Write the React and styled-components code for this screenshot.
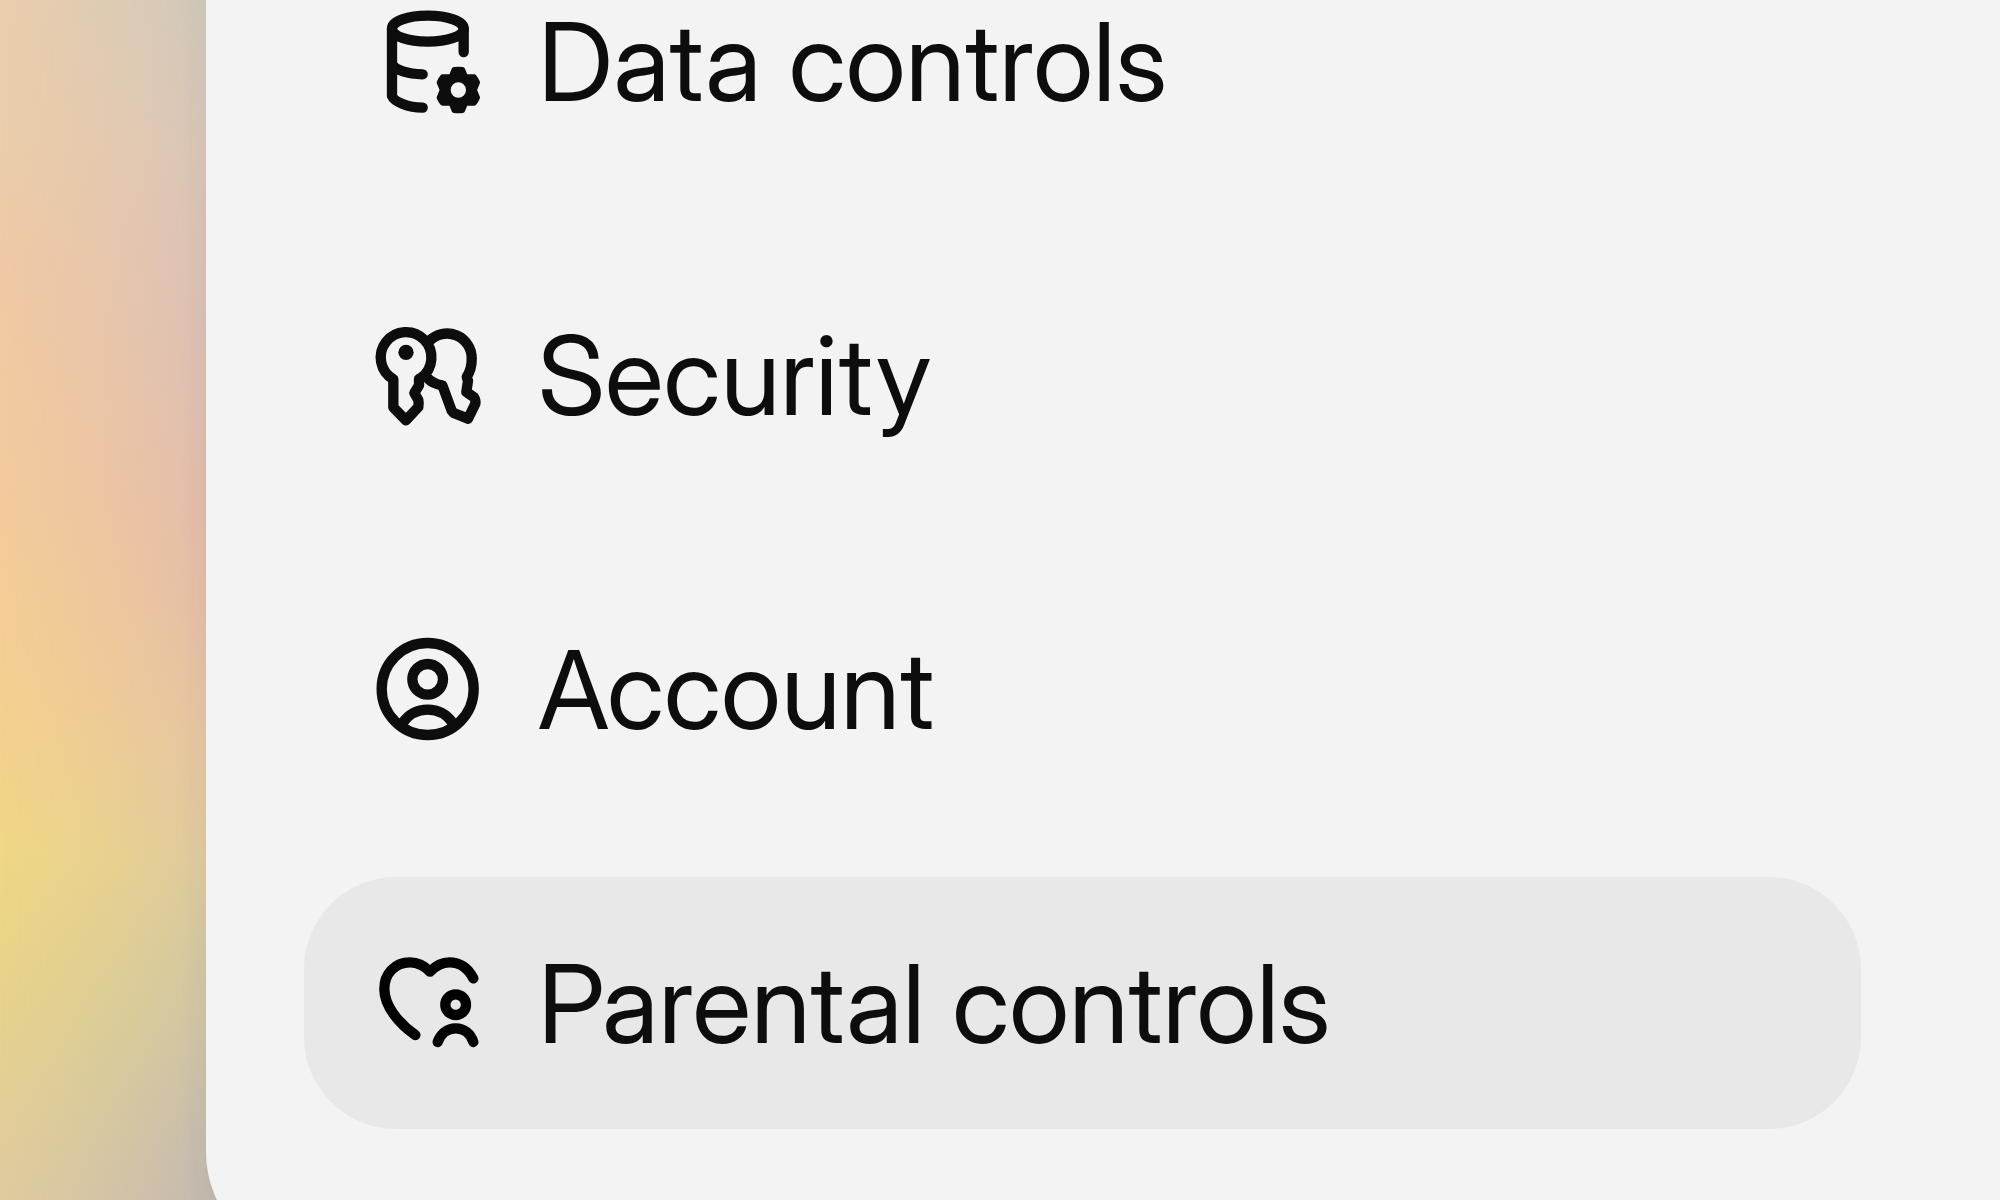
import React from "react";
import styled, { createGlobalStyle } from "styled-components";

const GlobalStyle = createGlobalStyle`
  *, *::before, *::after { box-sizing: border-box; }
  body { margin: 0; background: #f3f3f3; }
`;

const Stage = styled.main`
  position: relative;
  isolation: isolate;
  display: flex;
  align-items: flex-end;
  height: 100vh;
  padding-left: 206px;
  overflow: hidden;
  font-family: "Inter Display", Inter, "Liberation Sans", sans-serif;
  font-variation-settings: "opsz" 32;
  font-weight: 430;
  color: #0d0d0d;
`;

const Wallpaper = styled.div`
  position: absolute;
  inset: 0;
  z-index: -1;
  background: linear-gradient(
    180deg,
    #e9ceae 0%,
    #ebcdaa 12%,
    #f0c9a5 22%,
    #f4ca9d 40%,
    #f5cf90 58%,
    #f0d786 71%,
    #e8d489 80%,
    #e3d093 90%,
    #e0cb9f 100%
  );

  &::after {
    content: "";
    position: absolute;
    inset: 0;
    background: linear-gradient(
      180deg,
      #cfc8bb 0%,
      #d9c5b8 12%,
      #dbc0b5 28%,
      #e2bcac 42%,
      #e4bea8 50%,
      #e4c5a2 62%,
      #dcc99f 72%,
      #d0c5a5 84%,
      #c5bbb0 96%,
      #c3b9b0 100%
    );
    mask-image: linear-gradient(
      90deg,
      transparent 0,
      rgba(0, 0, 0, 0.2) 60px,
      rgba(0, 0, 0, 0.48) 120px,
      rgba(0, 0, 0, 0.75) 170px,
      #000 206px
    );
  }
`;

const Panel = styled.nav`
  flex: 1;
  margin-bottom: -64px;
  padding: 96px 139px 135px 98px;
  background: #f3f3f3;
  border-radius: 112px;
  border-top-right-radius: 0;
  border-bottom-right-radius: 0;
  box-shadow: 0 0 32px rgba(60, 60, 70, 0.06);
`;

const Menu = styled.ul`
  display: flex;
  flex-direction: column;
  gap: 62px;
  margin: 0;
  padding: 0;
  list-style: none;
`;

const MenuButton = styled.button`
  display: flex;
  align-items: center;
  gap: 50px;
  width: 100%;
  height: 252px;
  padding: 0 64px;
  border: 0;
  border-radius: 92px;
  background: ${({ $active }) => ($active ? "#e8e8e8" : "transparent")};
  color: inherit;
  font: inherit;
  font-variation-settings: inherit;
  font-size: 109px;
  line-height: 120px;
  text-align: left;
  white-space: nowrap;
  cursor: pointer;
`;

const Icon = styled.svg`
  flex: none;
  width: 120px;
  height: 120px;
  fill: none;
  stroke: currentColor;
  stroke-width: 31;
  stroke-linecap: round;
  stroke-linejoin: round;
`;

const DataIcon = () => (
  <Icon viewBox="24 3 360 360" aria-hidden="true">
    <path d="M96 86C96 64 143 47 203 47S311 64 311 86 263 125 203 125 96 108 96 86Z" />
    <path d="M311 86V156M96 86V288C103 306 144 322 188 323M96 192C105 211 144 222 188 223" />
    <path
      fill="currentColor"
      strokeWidth="14"
      fillRule="evenodd"
      d="M282 208Q295 207 308 208L317 230H343Q349 237 353 247L344 270 353 293Q349 303 343 310H317L308 332Q295 333 282 332L273 310H247Q241 303 237 293L246 270 237 247Q241 237 247 230H273ZM295 240A30 30 0 1 0 295 300A30 30 0 1 0 295 240Z"
    />
  </Icon>
);

const KeysIcon = () => (
  <Icon viewBox="24 15 360 360" aria-hidden="true">
    <path d="M100 208A76 76 0 1 1 184 203L177 207V226L163 249 175 270Q177 280 175 291L138 331 100 292Z" />
    <circle cx="138" cy="127" r="23" fill="currentColor" stroke="none" />
    <path d="M207 94A74 74 0 0 1 335 147Q336 176 320 201L324 212 319 246 342 262Q348 271 346 281L324 326 281 309 275 302 247 226Q219 223 200 202" />
  </Icon>
);

const AccountIcon = () => (
  <Icon viewBox="24 27 360 360" aria-hidden="true">
    <circle cx="203" cy="207" r="138" />
    <circle cx="203" cy="178" r="46" />
    <path d="M127 310Q155 269 203 269T279 310" />
  </Icon>
);

const ParentalIcon = () => (
  <Icon viewBox="24 9 360 360" aria-hidden="true" color="#000">
    <path d="M340 115C325 86 300 67 268 67 246 67 226 78 210 95 194 78 174 67 150 67 104 67 73 102 73 146 73 198 116 250 166 285" />
    <circle cx="287" cy="194" r="31" />
    <path d="M233 306C242 281 262 265 287 265S332 281 340 306" />
  </Icon>
);

const items = [
  { label: "Data controls", Glyph: DataIcon },
  { label: "Security", Glyph: KeysIcon },
  { label: "Account", Glyph: AccountIcon },
  { label: "Parental controls", Glyph: ParentalIcon, active: true },
];

export default function App() {
  return (
    <Stage>
      <GlobalStyle />
      <Wallpaper />
      <Panel aria-label="Settings">
        <Menu>
          {items.map(({ label, Glyph, active }) => (
            <li key={label}>
              <MenuButton
                type="button"
                $active={active}
                aria-current={active ? "page" : undefined}
              >
                <Glyph />
                {label}
              </MenuButton>
            </li>
          ))}
        </Menu>
      </Panel>
    </Stage>
  );
}
